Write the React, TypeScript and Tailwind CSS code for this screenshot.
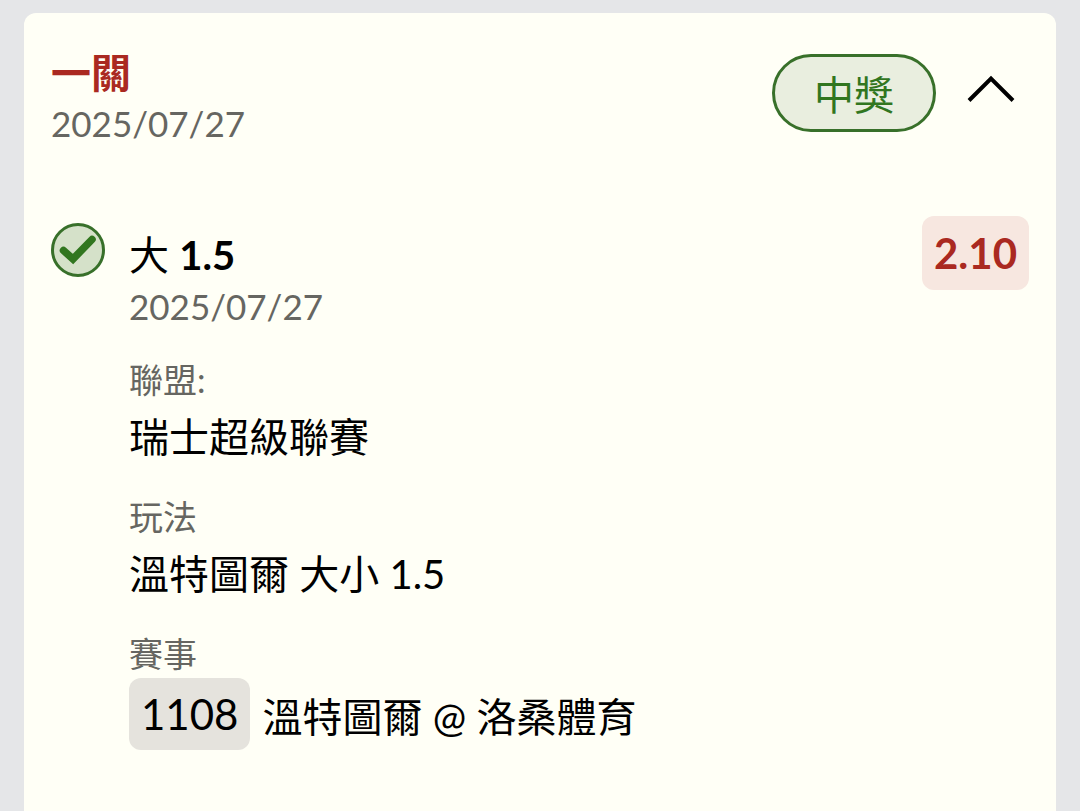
import { useState, type ReactNode } from "react";

function CheckBadge() {
  return (
    <svg className="mt-[7px] size-[54px] shrink-0" viewBox="0 0 54 54" role="img" aria-label="中獎">
      <circle cx="27" cy="27" r="25.5" fill="#d5e1c9" stroke="#38702a" strokeWidth="3" />
      <path d="M12.5 27.5L22 36L41 16.5" fill="none" stroke="#31761f" strokeWidth="7.5" strokeLinecap="round" strokeLinejoin="miter" />
    </svg>
  );
}

function Detail({ label, children }: { label: string; children: ReactNode }) {
  return (
    <div>
      <dt className="text-[34px] leading-[48px] text-[#666661]">{label}</dt>
      <dd className="text-[40px] leading-[66px]">{children}</dd>
    </div>
  );
}

export default function App() {
  const [open, setOpen] = useState(true);
  return (
    <div className="min-h-screen bg-[#e5e6e8] px-6 pt-[13px] font-[Lato,'Noto_Sans_CJK_TC',sans-serif] text-black">
      <main className="min-h-[798px] rounded-t-xl bg-[#fffff6] px-[27px] pt-9">
        <header className="flex items-start justify-between">
          <div>
            <h1 className="text-[40px] font-bold leading-[48px] text-[#aa2921]">一關</h1>
            <time className="block text-[35px] leading-[52px] text-[#666661]">2025/07/27</time>
          </div>
          <div className="mt-[5px] flex items-start gap-[31px] pr-[14px]">
            <span className="flex h-[78px] items-center rounded-full border-3 border-[#38702a] bg-[#e9eedf] px-[39px] pt-1 text-[40px] text-[#31761f]">中獎</span>
            <button type="button" aria-label="收合" aria-expanded={open} onClick={() => setOpen(!open)} className="mt-5">
              <svg className="h-8 w-12" viewBox="0 0 48 32" fill="none" stroke="black" strokeWidth="4">
                <path d="M2 26.5L24 4.5l22 22" />
              </svg>
            </button>
          </div>
        </header>
        {open && (
          <section className="mt-[67px] flex items-start">
            <CheckBadge />
            <div className="ml-6 flex-1">
              <h2 className="pt-3 text-[40px] leading-[54px]">大 <b>1.5</b></h2>
              <time className="block text-[35px] leading-[48px] text-[#666661]">2025/07/27</time>
              <dl className="mt-[26px] flex flex-col gap-[23px]">
                <Detail label="聯盟:">瑞士超級聯賽</Detail>
                <Detail label="玩法">溫特圖爾 大小 1.5</Detail>
                <Detail label="賽事">
                  <span className="flex items-center gap-3">
                    <span className="flex h-[72px] items-center rounded-xl bg-[#e5e3dd] px-3 text-[42px]">1108</span>
                    <span className="pt-1.5">溫特圖爾 @ 洛桑體育</span>
                  </span>
                </Detail>
              </dl>
            </div>
            <strong className="flex h-[74px] items-center rounded-xl bg-[#f7e7e0] px-3 text-[42px] text-[#aa2921]">2.10</strong>
          </section>
        )}
      </main>
    </div>
  );
}
